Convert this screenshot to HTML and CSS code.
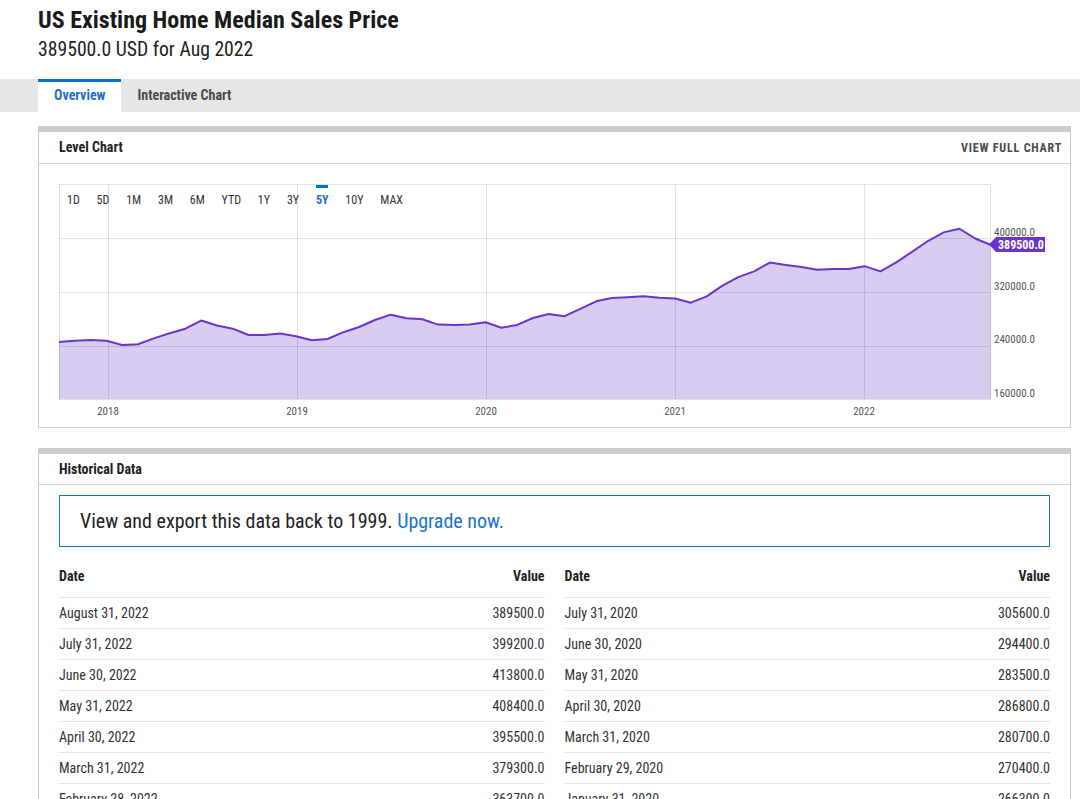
FILE: index.html
```html
<!DOCTYPE html>
<html lang="en">
<head>
<meta charset="utf-8">
<title>US Existing Home Median Sales Price</title>
<link rel="stylesheet" href="styles.css">
</head>
<body>
<header class="head">
  <h1 class="title">US Existing Home Median Sales Price</h1>
  <p class="sub">389500.0 USD for Aug 2022</p>
</header>
<nav class="tabs">
  <a class="tab active" href="#">Overview</a>
  <a class="tab" href="#">Interactive Chart</a>
</nav>
<main class="content">
  <section class="card">
    <div class="card-head">
      <h2 class="card-title">Level Chart</h2>
      <a class="card-link" href="#">VIEW FULL CHART</a>
    </div>
    <div class="chart">
      <svg class="chart-svg" width="1031" height="263" viewBox="39 164 1031 263">
        <g transform="matrix(15.797 0 0 -0.00067088 59 506.34)">
          <polygon class="area" points="0,160000 0,245100 1,247000 2,248000 3,246800 4,240500 5,241700 6,250400 7,257900 8,264800 9,276900 10,269600 11,264800 12,255400 13,255400 14,257700 15,253600 16,247600 17,249400 18,259600 19,267300 20,277700 21,285700 22,280500 23,278800 24,270900 25,270400 26,271200 27,274500 28,266300 29,270400 30,280700 31,286800 32,283500 33,294400 34,305600 35,310600 36,311800 37,313000 38,310800 39,309800 40,303600 41,313000 42,329100 43,341600 44,350300 45,363300 46,359900 47,356700 48,352800 49,353900 50,353900 51,358000 52,350300 53,363700 54,379300 55,395500 56,408400 57,413800 58,399200 59,389500 59,160000"/>
        </g>
        <g class="grid">
          <line x1="59" y1="184.5" x2="990" y2="184.5"/>
          <line x1="59" y1="238.5" x2="990" y2="238.5"/>
          <line x1="59" y1="292.5" x2="990" y2="292.5"/>
          <line x1="59" y1="346.5" x2="990" y2="346.5"/>
          <line x1="59" y1="399.5" x2="990" y2="399.5"/>
          <line x1="59.5" y1="184" x2="59.5" y2="400"/>
          <line x1="108.5" y1="185" x2="108.5" y2="399"/>
          <line x1="297.5" y1="185" x2="297.5" y2="399"/>
          <line x1="486.5" y1="185" x2="486.5" y2="399"/>
          <line x1="675.5" y1="185" x2="675.5" y2="399"/>
          <line x1="864.5" y1="185" x2="864.5" y2="399"/>
          <line x1="990.5" y1="184" x2="990.5" y2="400"/>
        </g>
        <g transform="matrix(15.797 0 0 -0.00067088 59 506.34)">
          <polyline class="line" points="0,245100 1,247000 2,248000 3,246800 4,240500 5,241700 6,250400 7,257900 8,264800 9,276900 10,269600 11,264800 12,255400 13,255400 14,257700 15,253600 16,247600 17,249400 18,259600 19,267300 20,277700 21,285700 22,280500 23,278800 24,270900 25,270400 26,271200 27,274500 28,266300 29,270400 30,280700 31,286800 32,283500 33,294400 34,305600 35,310600 36,311800 37,313000 38,310800 39,309800 40,303600 41,313000 42,329100 43,341600 44,350300 45,363300 46,359900 47,356700 48,352800 49,353900 50,353900 51,358000 52,350300 53,363700 54,379300 55,395500 56,408400 57,413800 58,399200 59,389500"/>
        </g>
        <g class="ylabels">
          <text x="994" y="235.5">400000.0</text>
          <text x="994" y="290">320000.0</text>
          <text x="994" y="343">240000.0</text>
          <text x="994" y="397">160000.0</text>
        </g>
        <g class="xlabels">
          <text x="108" y="414.5">2018</text>
          <text x="297" y="414.5">2019</text>
          <text x="486" y="414.5">2020</text>
          <text x="675" y="414.5">2021</text>
          <text x="864" y="414.5">2022</text>
        </g>
        <polygon class="badge" points="989,244.5 996,237 1045,237 1045,252 996,252"/>
        <text class="badge-text" x="998" y="249">389500.0</text>
      </svg>
      <div class="ranges">
        <span class="range">1D</span>
        <span class="range">5D</span>
        <span class="range">1M</span>
        <span class="range">3M</span>
        <span class="range">6M</span>
        <span class="range">YTD</span>
        <span class="range">1Y</span>
        <span class="range">3Y</span>
        <span class="range active">5Y</span>
        <span class="range">10Y</span>
        <span class="range">MAX</span>
      </div>
    </div>
  </section>

  <section class="card">
    <div class="card-head">
      <h2 class="card-title">Historical Data</h2>
    </div>
    <div class="card-body">
      <div class="upgrade">View and export this data back to 1999. <a href="#">Upgrade now.</a></div>
      <div class="tables">
        <table>
          <thead><tr><th>Date</th><th class="v">Value</th></tr></thead>
          <tbody>
            <tr><td>August 31, 2022</td><td class="v">389500.0</td></tr>
            <tr><td>July 31, 2022</td><td class="v">399200.0</td></tr>
            <tr><td>June 30, 2022</td><td class="v">413800.0</td></tr>
            <tr><td>May 31, 2022</td><td class="v">408400.0</td></tr>
            <tr><td>April 30, 2022</td><td class="v">395500.0</td></tr>
            <tr><td>March 31, 2022</td><td class="v">379300.0</td></tr>
            <tr><td>February 28, 2022</td><td class="v">363700.0</td></tr>
            <tr><td>January 31, 2022</td><td class="v">350300.0</td></tr>
            <tr><td>December 31, 2021</td><td class="v">358000.0</td></tr>
          </tbody>
        </table>
        <table>
          <thead><tr><th>Date</th><th class="v">Value</th></tr></thead>
          <tbody>
            <tr><td>July 31, 2020</td><td class="v">305600.0</td></tr>
            <tr><td>June 30, 2020</td><td class="v">294400.0</td></tr>
            <tr><td>May 31, 2020</td><td class="v">283500.0</td></tr>
            <tr><td>April 30, 2020</td><td class="v">286800.0</td></tr>
            <tr><td>March 31, 2020</td><td class="v">280700.0</td></tr>
            <tr><td>February 29, 2020</td><td class="v">270400.0</td></tr>
            <tr><td>January 31, 2020</td><td class="v">266300.0</td></tr>
            <tr><td>December 31, 2019</td><td class="v">274500.0</td></tr>
            <tr><td>November 30, 2019</td><td class="v">271200.0</td></tr>
          </tbody>
        </table>
      </div>
    </div>
  </section>
</main>
</body>
</html>
```

FILE: styles.css
```css
* { box-sizing: border-box; }

body {
  margin: 0;
  background: #fff;
  color: #333;
  font-family: "Roboto Condensed", "Liberation Sans Narrow", Roboto, sans-serif;
}

.head {
  height: 79px;
  padding: 6px 0 0 38px;
}

.title {
  margin: 0;
  font-size: 24px;
  line-height: 28px;
  font-weight: 700;
  color: #1a1a1a;
}

.sub {
  margin: 3px 0 0;
  font-size: 19.7px;
  line-height: 26px;
  color: #222;
}

.tabs {
  display: flex;
  height: 33px;
  padding-left: 38px;
  background: #e6e6e6;
}

.tab {
  padding: 0 16px 4px;
  border-top: 3px solid transparent;
  font-size: 14px;
  line-height: 26px;
  font-weight: 700;
  color: #4a4a4a;
  text-decoration: none;
}

.tab.active {
  background: #fff;
  border-top-color: #0073d1;
  color: #1f6fc9;
}

.content {
  width: 1071px;
  padding: 14px 0 40px 38px;
}

.card {
  border: 1px solid #cccccc;
  border-top: 6px solid #cccccc;
}

.card + .card { margin-top: 20px; }

.card-head {
  display: flex;
  justify-content: space-between;
  align-items: baseline;
  padding: 1px 8px 1px 20px;
  line-height: 28px;
  border-bottom: 1px solid #d4d4d4;
}

.card-title {
  margin: 0;
  font-size: 14px;
  font-weight: 700;
  color: #222;
}

.card-link {
  font-size: 12px;
  font-weight: 700;
  letter-spacing: 0.8px;
  color: #4a4a4a;
  text-decoration: none;
}

.chart {
  position: relative;
  height: 263px;
}

.chart-svg { display: block; }

.area { fill: #d8cdf0; stroke: none; }

.grid line {
  stroke: rgba(0, 0, 0, 0.11);
  stroke-width: 1;
}

.line {
  fill: none;
  stroke: #6a35c9;
  stroke-width: 2;
  stroke-linejoin: round;
  vector-effect: non-scaling-stroke;
}

.ylabels text,
.xlabels text {
  font-family: "Roboto Condensed", "Liberation Sans Narrow", Roboto, sans-serif;
  font-size: 11px;
  fill: #555;
}

.xlabels text { text-anchor: middle; }

.badge { fill: #6a34c8; }

.badge-text {
  font-family: "Roboto Condensed", "Liberation Sans Narrow", Roboto, sans-serif;
  font-size: 12px;
  font-weight: 700;
  fill: #fff;
}

.ranges {
  position: absolute;
  left: 28px;
  top: 21px;
  display: flex;
  gap: 16.8px;
}

.range {
  border-top: 3px solid transparent;
  padding-top: 5px;
  font-size: 12px;
  line-height: 14px;
  color: #333;
}

.range.active {
  border-top-color: #0073d1;
  color: #1f6fc9;
  font-weight: 700;
}

.card-body {
  padding: 10px 20px 0;
}

.upgrade {
  border: 1px solid #1a73c9;
  padding-left: 20px;
  font-size: 20px;
  line-height: 50px;
  color: #222;
}

.upgrade a {
  color: #1a73c9;
  text-decoration: none;
}

.tables {
  display: grid;
  grid-template-columns: 1fr 1fr;
  gap: 20px;
}

table {
  width: 100%;
  border-collapse: collapse;
  font-size: 14px;
}

th {
  padding: 20px 0 12px;
  line-height: 18px;
  text-align: left;
  font-weight: 700;
  color: #222;
  border-bottom: 1px solid #e3e3e3;
}

td {
  padding: 0;
  line-height: 30px;
  color: #333;
  border-bottom: 1px solid #e3e3e3;
}

th.v, td.v { text-align: right; }
```
